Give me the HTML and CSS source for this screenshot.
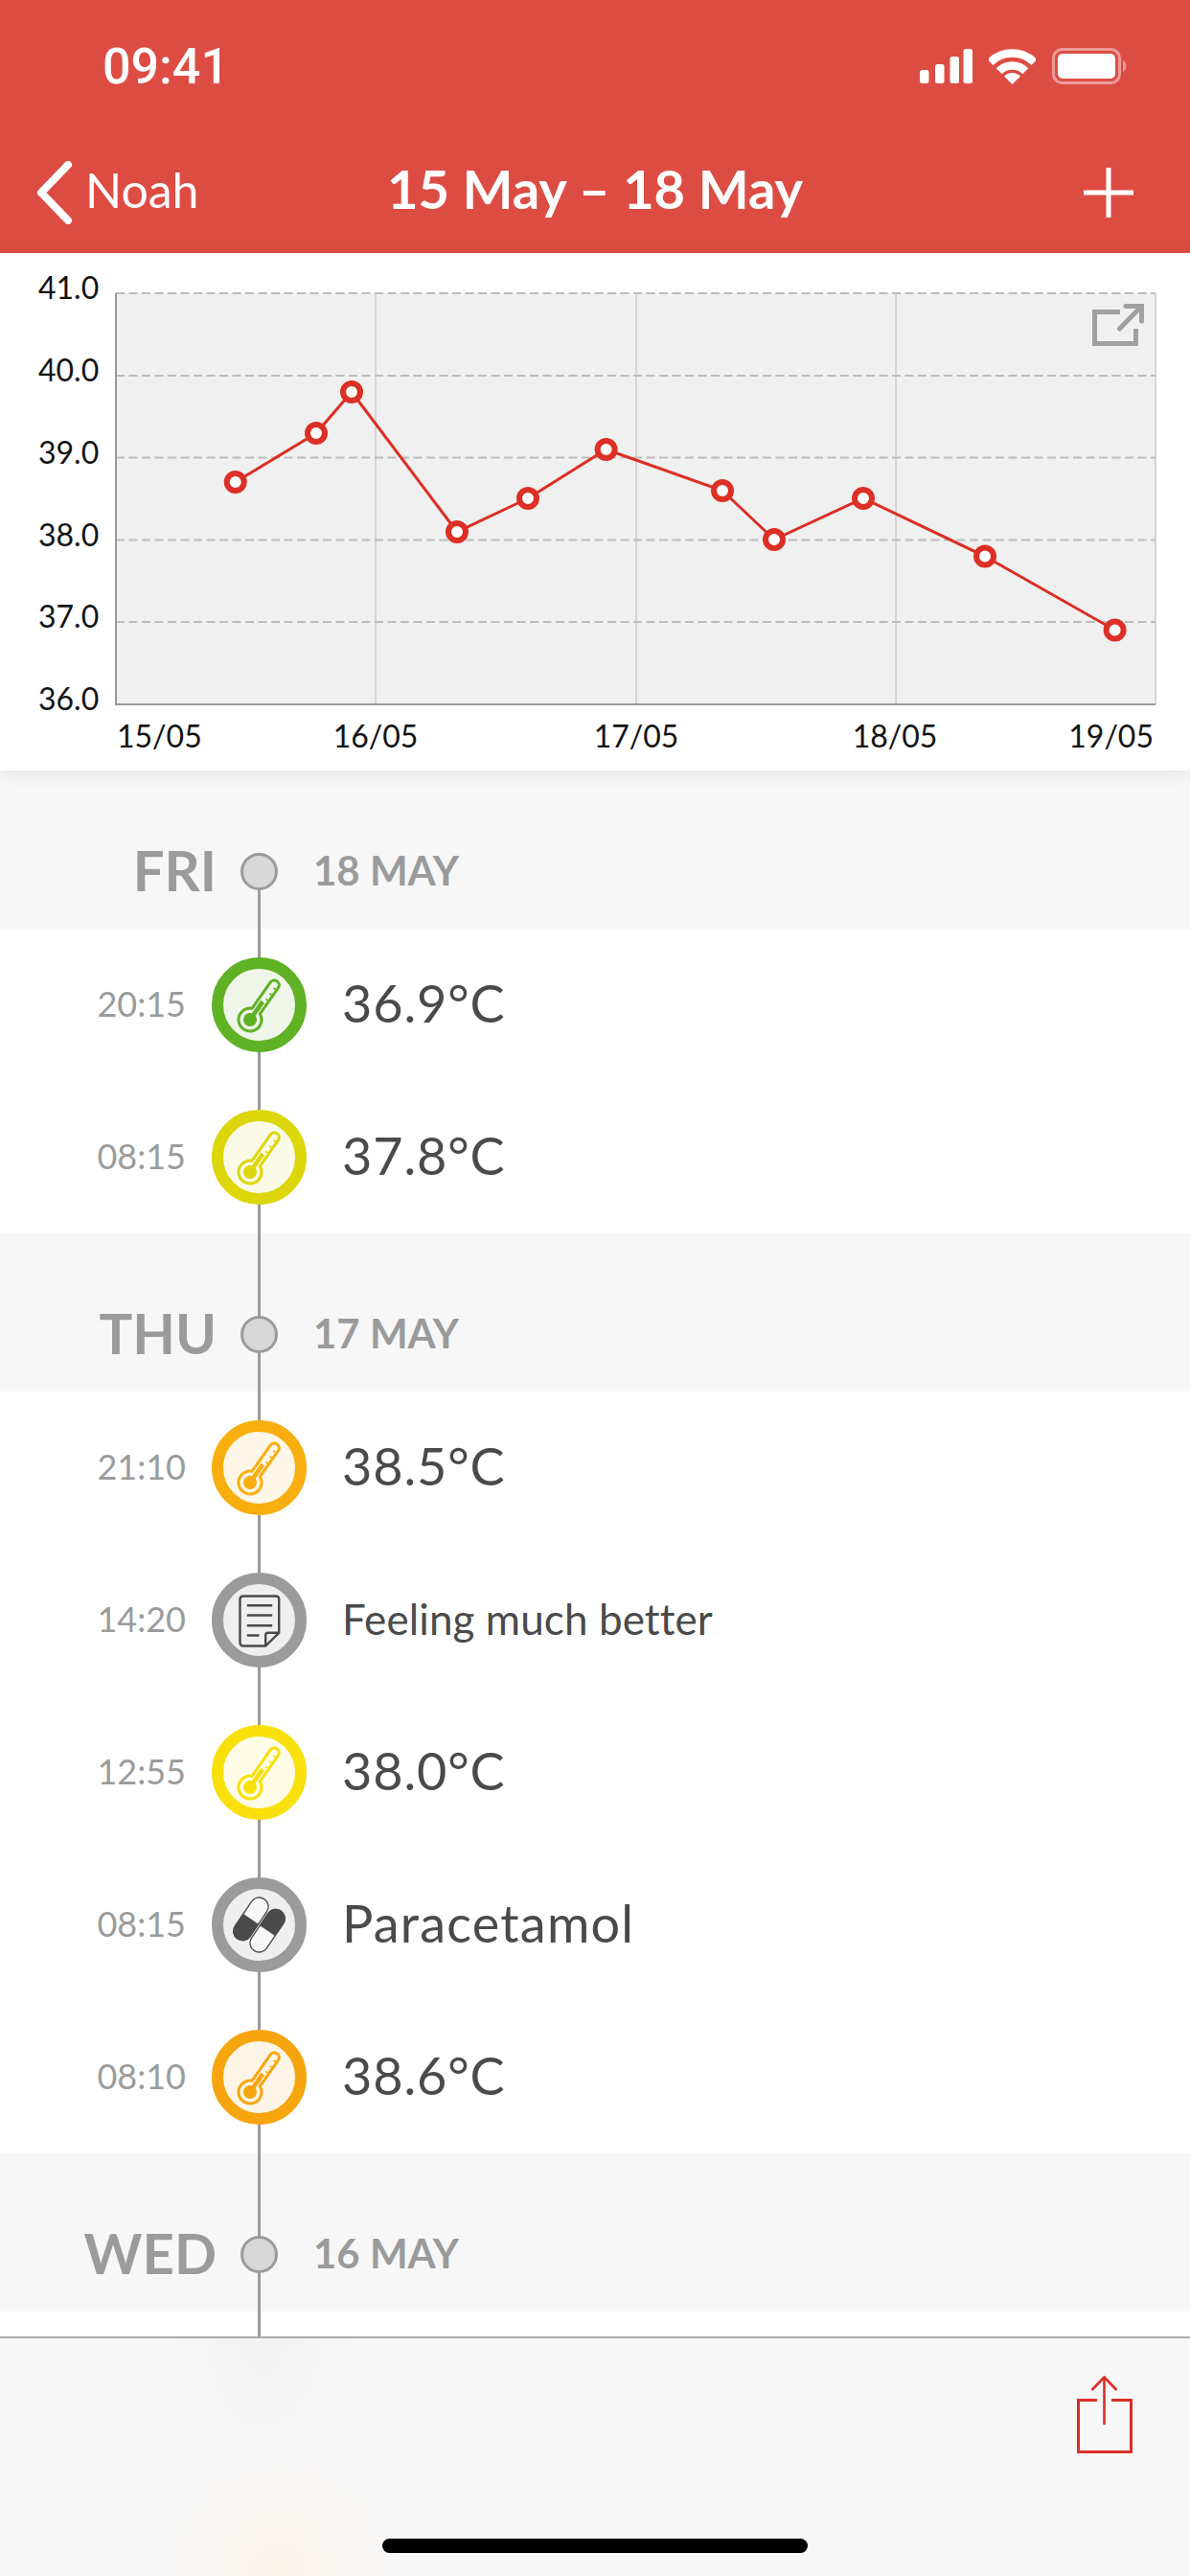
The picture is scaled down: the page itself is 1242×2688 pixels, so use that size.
FILE: index.html
```html
<!DOCTYPE html>
<html>
  <head>
    <meta name="viewport" content="width=device-width, initial-scale=1.0" />
    <title>Noah - Temperature log</title>
    <link rel="stylesheet" href="styles.css">
  </head>
  <body>
    <svg class="defs" width="0" height="0">
      <symbol id="thermo" viewBox="0 0 75 75">
        <g transform="translate(28 53) rotate(35)" fill="none" stroke="currentColor" stroke-width="3">
          <path d="M-5 -10.9 V-44 a5 5 0 0 1 10 0 V-10.9 A12 12 0 1 1 -5 -10.9 Z" />
          <circle cx="0" cy="0" r="7" fill="currentColor" stroke="none" />
          <path d="M0 -6 V-23" stroke-width="4.6" />
          <path d="M1 -27 h3 M1 -34 h3 M1 -41 h3" stroke-width="1.6" />
        </g>
      </symbol>
      <symbol id="note" viewBox="0 0 75 75">
        <g fill="none" stroke="currentColor" stroke-width="2.4" stroke-linejoin="round">
          <path d="M44.2 64.5 H20.5 a3 3 0 0 1 -3 -3 V15.5 a3 3 0 0 1 3 -3 H55.2 a3 3 0 0 1 3 3 V50.8 Z" />
          <path d="M44.2 64.5 V53.5 a2.7 2.7 0 0 1 2.7 -2.7 H58.2" />
          <path d="M24.8 22.2 H51.2 M24.8 32.5 H51.2 M24.8 43.2 H51.2 M24.8 53.5 H37.5" />
        </g>
      </symbol>
      <symbol id="pills" viewBox="0 0 75 75">
        <g transform="translate(28.85 31.35) rotate(34)">
          <rect x="-9.5" y="-25" width="19" height="50" rx="9.5" fill="#f7f7f7" stroke="currentColor" stroke-width="1.3" />
          <path d="M-10 0 V15.5 a10 10 0 0 0 20 0 V0 Z" fill="currentColor" />
        </g>
        <g transform="translate(46.15 43.65) rotate(34)">
          <rect x="-9.5" y="-25" width="19" height="50" rx="9.5" fill="#f7f7f7" stroke="currentColor" stroke-width="1.3" />
          <path d="M-10 0 V-15.5 a10 10 0 0 1 20 0 V0 Z" fill="currentColor" />
        </g>
      </symbol>
    </svg>

    <header class="topbar">
      <div class="status">
        <span class="clock">09:41</span>
        <div class="status-icons">
          <svg width="55" height="36" viewBox="0 0 55 36" fill="#fff">
            <rect x="0" y="22" width="9.5" height="14" rx="2.5" />
            <rect x="16" y="16" width="9.5" height="20" rx="2.5" />
            <rect x="31.5" y="8" width="9.5" height="28" rx="2.5" />
            <rect x="45.5" y="0" width="9.5" height="36" rx="2.5" />
          </svg>
          <svg width="49" height="37" viewBox="0 0 49 37" fill="none" stroke="#fff" stroke-width="8.5">
            <path d="M1.5 14 A32.5 32.5 0 0 1 47.5 14" />
            <path d="M10.7 23.2 A19.5 19.5 0 0 1 38.3 23.2" />
            <path d="M24.5 37 L16 28.5 A12 12 0 0 1 33 28.5 Z" fill="#fff" stroke="none" />
          </svg>
          <svg width="79" height="38" viewBox="0 0 79 38">
            <rect x="1.5" y="1.5" width="69" height="35" rx="9" fill="none" stroke="#fff" stroke-opacity=".45" stroke-width="3" />
            <rect x="6" y="6" width="60" height="26" rx="5" fill="#fff" />
            <path d="M74 13 a7 7 0 0 1 0 12 Z" fill="#fff" fill-opacity=".45" />
          </svg>
        </div>
      </div>
      <nav class="nav">
        <div class="nav-back">
          <svg width="38" height="66" viewBox="0 0 38 66" fill="none" stroke="#fff" stroke-width="8" stroke-linecap="round" stroke-linejoin="round">
            <path d="M33 4 L5 33 L33 62" />
          </svg>
          <span>Noah</span>
        </div>
        <h1 class="nav-title">15 May – 18 May</h1>
        <div class="nav-add">
          <svg width="52" height="52" viewBox="0 0 52 52" stroke="#fff" stroke-width="5">
            <path d="M26 0 V52 M0 26 H52" />
          </svg>
        </div>
      </nav>
    </header>

    <section class="chart">
      <svg width="1242" height="540" viewBox="0 264 1242 540">
        <rect class="plot" x="121" y="306" width="1085" height="429" />
        <path class="vgrid" d="M392 306 V735 M664 306 V735 M935 306 V735 M1206 306 V735" />
        <path class="hgrid" d="M121 306 H1206 M121 392 H1206 M121 477.5 H1206 M121 563.5 H1206 M121 649 H1206" />
        <path class="axis" d="M121 306 V735 H1206" />

        <text class="ylabel" x="40" y="312">41.0</text>
        <text class="ylabel" x="40" y="397.5">40.0</text>
        <text class="ylabel" x="40" y="483.5">39.0</text>
        <text class="ylabel" x="40" y="569.5">38.0</text>
        <text class="ylabel" x="40" y="655">37.0</text>
        <text class="ylabel" x="40" y="741">36.0</text>

        <text class="ylabel" x="122" y="779.5">15/05</text>
        <text class="ylabel mid" x="392" y="779.5">16/05</text>
        <text class="ylabel mid" x="664" y="779.5">17/05</text>
        <text class="ylabel mid" x="934" y="779.5">18/05</text>
        <text class="ylabel end" x="1204" y="779.5">19/05</text>

        <polyline class="trace" points="245.7,503 330,452 367,409 477,555 551,520 632.6,469 754,512 808,563 901,520 1028,580.5 1163.6,657.5" />
        <g class="dots">
          <circle cx="245.7" cy="503" r="9" />
          <circle cx="330" cy="452" r="9" />
          <circle cx="367" cy="409" r="9" />
          <circle cx="477" cy="555" r="9" />
          <circle cx="551" cy="520" r="9" />
          <circle cx="632.6" cy="469" r="9" />
          <circle cx="754" cy="512" r="9" />
          <circle cx="808" cy="563" r="9" />
          <circle cx="901" cy="520" r="9" />
          <circle cx="1028" cy="580.5" r="9" />
          <circle cx="1163.6" cy="657.5" r="9" />
        </g>

        <g class="expand">
          <path d="M1169 325.5 H1142.5 V358.5 H1185.5 V343" />
          <path d="M1168.5 343 L1191 320 M1175 319.5 H1191.5 V335" stroke-linecap="round" />
        </g>
      </svg>
    </section>

    <main class="timeline">
      <div class="day">
        <span class="day-name">FRI</span>
        <span class="day-dot"></span>
        <span class="day-date">18 MAY</span>
      </div>
      <div class="entry">
        <span class="time">20:15</span>
        <span class="marker green"><svg width="75" height="75"><use href="#thermo" /></svg></span>
        <span class="value">36.9°C</span>
      </div>
      <div class="entry">
        <span class="time">08:15</span>
        <span class="marker lime"><svg width="75" height="75"><use href="#thermo" /></svg></span>
        <span class="value">37.8°C</span>
      </div>

      <div class="day">
        <span class="day-name">THU</span>
        <span class="day-dot"></span>
        <span class="day-date">17 MAY</span>
      </div>
      <div class="entry">
        <span class="time">21:10</span>
        <span class="marker amber"><svg width="75" height="75"><use href="#thermo" /></svg></span>
        <span class="value">38.5°C</span>
      </div>
      <div class="entry">
        <span class="time">14:20</span>
        <span class="marker grey"><svg width="75" height="75"><use href="#note" /></svg></span>
        <span class="value small">Feeling much better</span>
      </div>
      <div class="entry">
        <span class="time">12:55</span>
        <span class="marker yellow"><svg width="75" height="75"><use href="#thermo" /></svg></span>
        <span class="value">38.0°C</span>
      </div>
      <div class="entry">
        <span class="time">08:15</span>
        <span class="marker grey"><svg width="75" height="75"><use href="#pills" /></svg></span>
        <span class="value name">Paracetamol</span>
      </div>
      <div class="entry">
        <span class="time">08:10</span>
        <span class="marker orange"><svg width="75" height="75"><use href="#thermo" /></svg></span>
        <span class="value">38.6°C</span>
      </div>

      <div class="day">
        <span class="day-name">WED</span>
        <span class="day-dot"></span>
        <span class="day-date">16 MAY</span>
      </div>
    </main>

    <footer class="toolbar">
      <div class="toolbar-row">
        <svg width="58" height="82" viewBox="0 0 58 82" fill="none" stroke="#d92f26" stroke-width="3">
          <path d="M21 25.5 H1.5 V79.5 H56.5 V25.5 H36" />
          <path d="M28.5 1 V51" stroke-width="2.6" />
          <path d="M15.5 15 L28.5 1.5 L41.5 15" stroke-width="2.6" />
        </svg>
      </div>
      <div class="home-bar"></div>
    </footer>
  </body>
</html>
```

FILE: styles.css
```css
html,
body {
  margin: 0;
  padding: 0;
}
body {
  display: flex;
  flex-direction: column;
  width: 1242px;
  height: 2688px;
  overflow: hidden;
  background-color: #fff;
  font-family: Lato, "Noto Sans", sans-serif;
}
.defs {
  display: none;
}

/* red header */
.topbar {
  background-color: #dd4c43;
  color: #fff;
}
.status {
  display: flex;
  align-items: center;
  justify-content: space-between;
  height: 138px;
  padding: 0 65px 0 107px;
}
.clock {
  font-family: Roboto, sans-serif;
  font-size: 52px;
  font-weight: 500;
}
.status-icons {
  display: flex;
  align-items: center;
  gap: 17px;
}
.status-icons svg {
  display: block;
}
.nav {
  display: grid;
  grid-template-columns: 1fr auto 1fr;
  align-items: center;
  height: 126px;
  padding: 0 38px;
}
.nav-back {
  display: flex;
  align-items: center;
  gap: 13px;
  font-size: 50px;
}
.nav-back span {
  padding-bottom: 6px;
}
.nav-title {
  margin: 0;
  padding-bottom: 10px;
  font-size: 56px;
  font-weight: 700;
}
.nav-add {
  display: flex;
  justify-content: flex-end;
  padding-right: 21px;
}
.nav svg {
  display: block;
}

/* chart */
.chart {
  position: relative;
  z-index: 3;
  height: 540px;
  background-color: #fff;
  box-shadow: 0 3px 18px rgba(0, 0, 0, 0.09);
}
.chart svg {
  display: block;
}
.plot {
  fill: #f0f0f0;
}
.vgrid {
  fill: none;
  stroke: #d6d6d6;
  stroke-width: 2;
}
.hgrid {
  fill: none;
  stroke: #bcbcbc;
  stroke-width: 2;
  stroke-dasharray: 9 4.5;
}
.axis {
  fill: none;
  stroke: #999;
  stroke-width: 2;
}
.ylabel {
  font-size: 32px;
  fill: #141414;
}
.mid {
  text-anchor: middle;
}
.end {
  text-anchor: end;
}
.trace {
  fill: none;
  stroke: #dc2f25;
  stroke-width: 3;
}
.dots circle {
  fill: #fff;
  stroke: #dc2f25;
  stroke-width: 6;
}
.expand path {
  fill: none;
  stroke: #a0a0a0;
  stroke-width: 5;
}

/* timeline */
.timeline {
  position: relative;
  flex: 1;
  overflow: hidden;
}
.timeline::before {
  content: "";
  position: absolute;
  z-index: 1;
  top: 105px;
  bottom: 0;
  left: 269px;
  width: 3px;
  background-color: #9b9b9b;
}
.day {
  display: flex;
  align-items: center;
  box-sizing: border-box;
  height: 165px;
  padding-top: 45px;
  background-color: #f7f7f7;
  color: #9b9b9b;
}
.day-name {
  width: 226px;
  padding-bottom: 4px;
  font-size: 58px;
  font-weight: 700;
  text-align: right;
}
.day-dot {
  position: relative;
  z-index: 2;
  box-sizing: border-box;
  width: 39px;
  height: 39px;
  margin: 0 37px 0 25px;
  border: 3px solid #9b9b9b;
  border-radius: 50%;
  background-color: #d8d8d8;
}
.day-date {
  padding-bottom: 3px;
  font-size: 42px;
  font-weight: 700;
}
.entry {
  display: flex;
  align-items: center;
  height: 159px;
}
.time {
  width: 194px;
  padding-bottom: 3px;
  color: #9b9b9b;
  font-size: 36px;
  text-align: right;
}
.marker {
  position: relative;
  z-index: 2;
  display: flex;
  align-items: center;
  justify-content: center;
  box-sizing: border-box;
  width: 99px;
  height: 99px;
  margin: 0 37px 0 27px;
  border: 12px solid currentColor;
  border-radius: 50%;
}
.marker svg {
  display: block;
  flex: none;
}
.green {
  color: #5fb224;
  background-color: #eff6e9;
}
.lime {
  color: #dcd60a;
  background-color: #fbfae7;
}
.amber {
  color: #f8ae0e;
  background-color: #fef6e7;
}
.yellow {
  color: #f9e00a;
  background-color: #fefbe6;
}
.orange {
  color: #f6a50e;
  background-color: #fef5e7;
}
.grey {
  color: #9b9b9b;
  background-color: #efefef;
}
.grey svg {
  color: #4a4a4a;
}
.value {
  padding-bottom: 4px;
  color: #4a4a4a;
  font-size: 54px;
  letter-spacing: 0.9px;
}
.value.small {
  font-size: 44px;
  letter-spacing: 0.1px;
}
.value.name {
  letter-spacing: 1.2px;
}

/* bottom toolbar */
.toolbar {
  position: relative;
  z-index: 2;
  display: flex;
  flex-direction: column;
  align-items: center;
  box-sizing: border-box;
  height: 250px;
  padding-top: 39px;
  border-top: 2px solid #aaa;
  background-color: #f8f8f8;
  background-image: radial-gradient(ellipse 110px 170px at 275px 0, #f2f2f2, transparent),
    radial-gradient(ellipse 130px 150px at 290px 250px, #fbf3eb, transparent);
}
.toolbar-row {
  display: flex;
  justify-content: flex-end;
  align-self: stretch;
  padding-right: 60px;
}
.toolbar-row svg {
  display: block;
}
.home-bar {
  width: 444px;
  height: 15px;
  margin-top: auto;
  margin-bottom: 24px;
  border-radius: 8px;
  background-color: #000;
}
```
